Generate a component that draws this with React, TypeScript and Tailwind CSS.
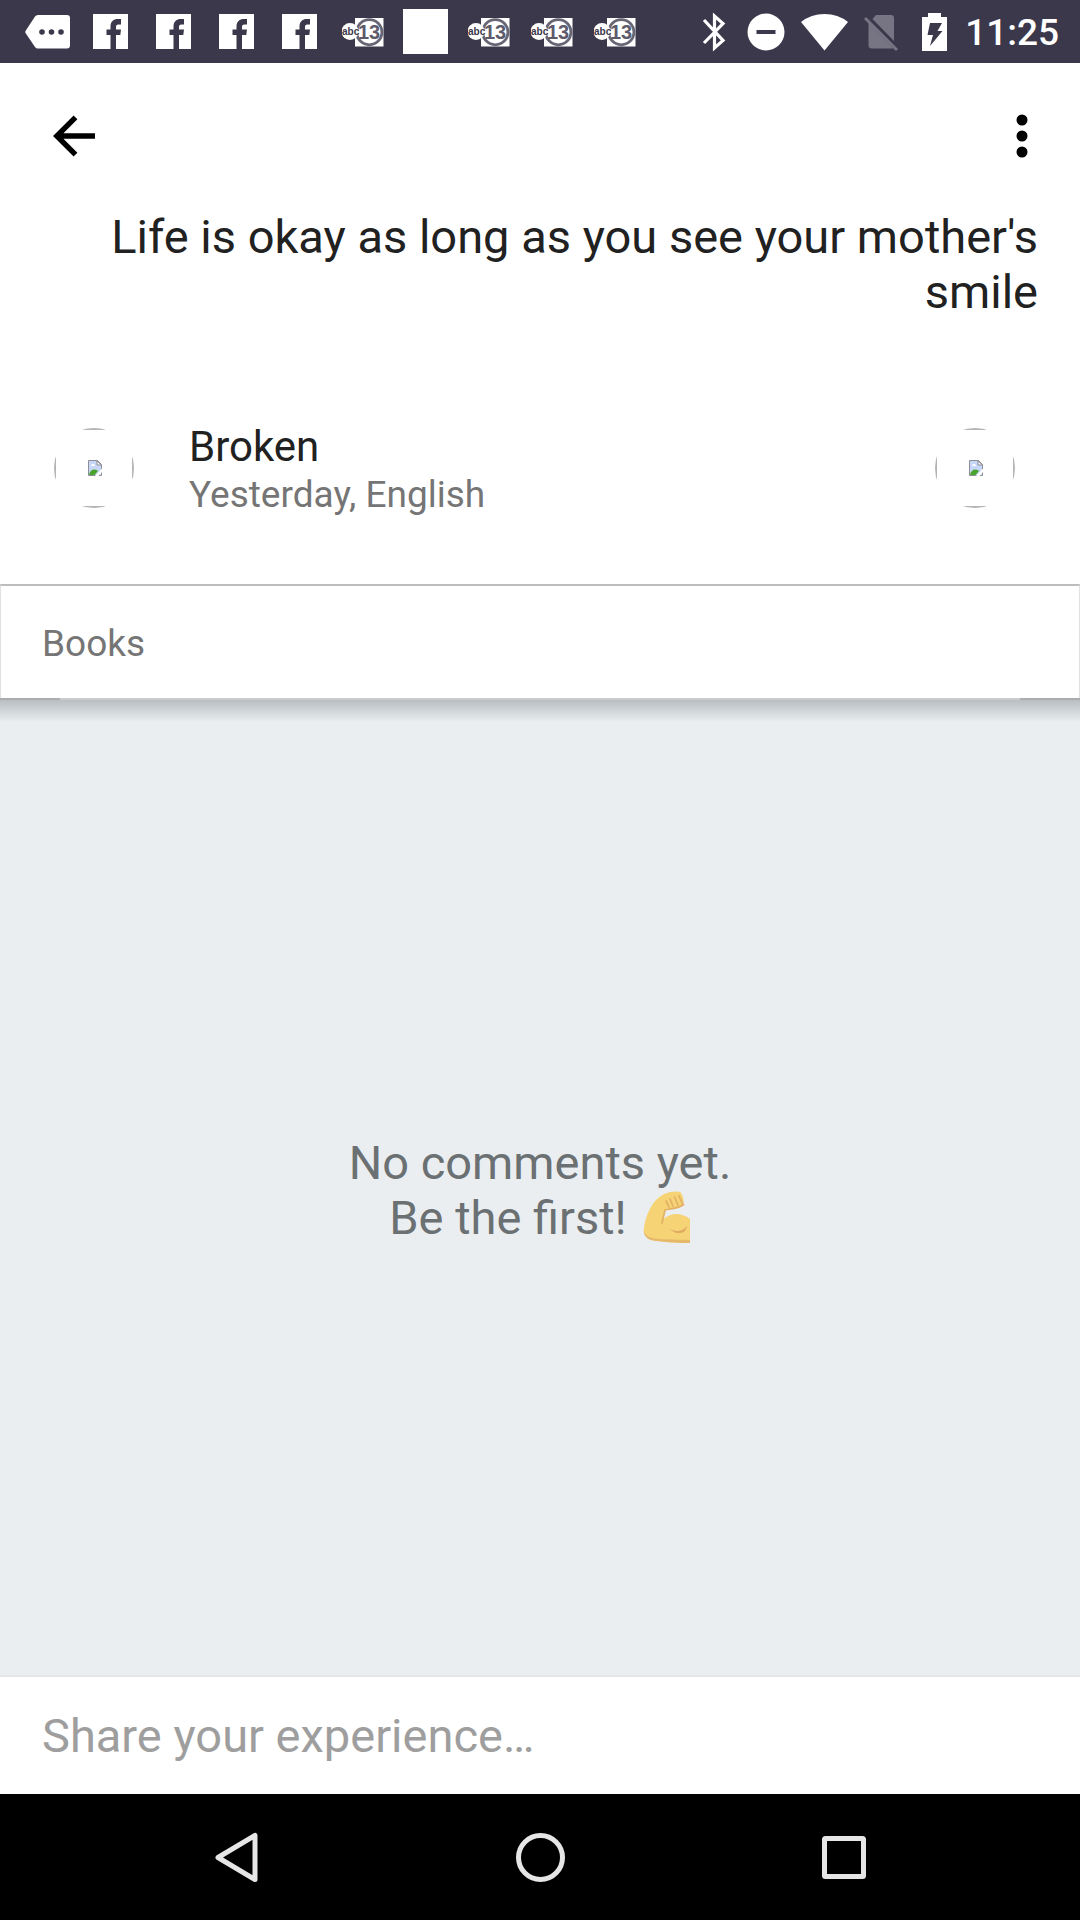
import React from 'react';

function TagIcon() {
  return (
    <svg viewBox="0 0 46 36" className="h-[36px] w-[46px]" aria-hidden="true">
      <path d="M13 1H42Q45 1 45 4V31Q45 34.500 42 34.500H13Q11 34.500 10 33L0.500 19Q0 18 0.500 17L10 2.500Q11 1 13 1Z" fill="#fff" />
      <circle cx="17" cy="18" r="2.800" fill="#3b384b" />
      <circle cx="26.500" cy="18" r="2.800" fill="#3b384b" />
      <circle cx="36" cy="18" r="2.800" fill="#3b384b" />
    </svg>
  );
}

function FacebookIcon() {
  return (
    <svg viewBox="0 0 35 35" className="size-[35px]" aria-hidden="true">
      <path d="M0 0H35V35H0Z" fill="#fff" />
      <path d="M17.500 35V21H13.500V15.500H17.500V12.500C17.500 7.500 20.500 5 25 5H28V10.500H25.500C23.500 10.500 23 11.500 23 13V15.500H28L27.300 21H23V35Z" fill="#3b384b" />
    </svg>
  );
}

function Abc13Icon() {
  return (
    <svg viewBox="0 0 42 30" className="h-[30px] w-[42px]" aria-hidden="true">
      <path d="M13 1H41.500V29.500H13Z" fill="#fff" />
      <circle cx="27.300" cy="15.200" r="12.600" fill="#fff" stroke="#686675" strokeWidth="2.800" />
      <circle cx="8" cy="14.500" r="8.500" fill="#fff" />
      <text x="0" y="18" fontSize="10" fontWeight="700" fontFamily="Liberation Sans, sans-serif" fill="#3b384b">
        abc
      </text>
      <text x="16" y="22" fontSize="20" fontWeight="700" fontFamily="Liberation Sans, sans-serif" fill="#5d5a6b">
        13
      </text>
    </svg>
  );
}

function SystemIcons() {
  return (
    <div className="flex items-center text-white">
      <svg viewBox="0 0 24 40" className="mr-[21px] h-[40px] w-[24px]" aria-hidden="true">
        <path d="M2 8L21 28.500L12.500 36V4L21 11.500L2 31" fill="none" stroke="currentColor" strokeWidth="3.200" />
      </svg>
      <svg viewBox="0 0 38 38" className="mr-[16px] size-[38px]" aria-hidden="true">
        <circle cx="19" cy="19" r="18.500" fill="currentColor" />
        <path d="M9.500 19H28.500" stroke="#3b384b" strokeWidth="4" />
      </svg>
      <svg viewBox="0 0 47 38" className="mr-[16px] h-[38px] w-[47px]" aria-hidden="true">
        <path d="M0 9Q10 1 23.500 1T47 9L23.500 37.500Z" fill="currentColor" />
      </svg>
      <svg viewBox="0 0 34 38" className="mr-[24px] h-[38px] w-[34px]" aria-hidden="true">
        <path d="M12 2H27Q30 2 30 5V28L8.500 6ZM4.500 10L29 35Q28.500 35.500 27 35.500H8Q4.500 35.500 4.500 32Z" fill="#777583" />
        <path d="M1 5L33 37" stroke="#777583" strokeWidth="3" />
      </svg>
      <svg viewBox="0 0 25 38" className="mr-[18px] h-[38px] w-[25px]" aria-hidden="true">
        <path d="M6 0H19V4H25V38H0V4H6Z" fill="currentColor" />
        <path d="M8 10H20L15.500 18H20.500L8 33L11 22H5.500Z" fill="#3b384b" />
      </svg>
      <span className="pt-[2px] text-[37px] leading-[40px] font-medium">11:25</span>
    </div>
  );
}

function StatusBar() {
  const icons = [TagIcon, FacebookIcon, FacebookIcon, FacebookIcon, FacebookIcon, Abc13Icon, null, Abc13Icon, Abc13Icon, Abc13Icon];
  return (
    <div className="flex h-[63px] items-center justify-between bg-[#3b384b] pr-[21px] pl-[16px]">
      <div className="flex items-center">
        {icons.map((Icon, i) => (
          <span key={i} className="flex w-[63px] justify-center">
            {Icon ? <Icon /> : <span className="size-[45px] bg-white" />}
          </span>
        ))}
      </div>
      <SystemIcons />
    </div>
  );
}

function MissingPicture() {
  return (
    <span className="block size-[80px] shrink-0 overflow-hidden rounded-full">
      <span className="flex size-full items-center justify-center border-2 border-[#b4b4b4]">
        <svg viewBox="0 0 14 16" className="ml-[2px] h-[16px] w-[14px]" aria-hidden="true">
          <path d="M0.500 0.500H9.500L13.500 4.500V15.500H0.500Z" fill="#c6d7f7" stroke="#8e8e96" />
          <path d="M9 1V5H13.500Z" fill="#fff" stroke="#8e8e96" />
          <path d="M3 6Q3 4 5 4Q7 4 7 6Z" fill="#fff" />
          <path d="M1 15Q2 9.500 6.500 9.500Q9 9.500 10 11L6.500 15Z" fill="#4aa32c" />
          <path d="M7 16L14 8.500V12L10.500 16Z" fill="#fff" />
        </svg>
      </span>
    </span>
  );
}

function FlexedArm() {
  return (
    <svg viewBox="0 0 48 54" role="img" aria-label="Flexed arm" className="h-[54px] w-[48px]">
      <path d="M1 38C2 28 7 16 14 9C20 3 30 0 37 2C40 4 41 10 40.500 15C38 18 30 19 22 20L20 30C25 24 34 23 39 25Q44 26 47 29V53C34 53 18 52 8 50C2 48 0 43 1 38Z" fill="#f6d476" />
      <path d="M1 41C3 47 8 48 15 49L47 50V53C33 53 17 52 8 50C3 48 1 45 1 41Z" fill="#e6b96a" />
      <path d="M40.500 14.500C37 18 28 18.500 22 20L19 33M26 17L23 11M30 16L27 9M35 15L31.500 7M39.500 13.500L36 6" fill="none" stroke="#e3b266" strokeWidth="1.800" strokeLinecap="round" />
      <path d="M27 39C32 42 40 42 44 36C43 45 32 45 27 39Z" fill="#e0ab62" />
    </svg>
  );
}

function CardShadow() {
  return (
    <div className="absolute -inset-x-px top-full" aria-hidden="true">
      <div className="flex h-[2px] bg-[#c8cccf]">
        <span className="w-[60px] bg-[#a9adaf]" />
        <span className="flex-1" />
        <span className="w-[60px] bg-[#a9adaf]" />
      </div>
      <div className="h-[22px] bg-linear-to-b from-[#b8bec1] to-[#eaeef1]" />
    </div>
  );
}

export default function App() {
  return (
    <div className="flex min-h-screen flex-col bg-white font-[Roboto,sans-serif]">
      <StatusBar />
      <header className="flex h-[146px] items-center justify-between px-[42px]">
        <button type="button" aria-label="Back" className="flex size-[64px] items-center justify-center">
          <svg viewBox="0 0 42 42" className="size-[42px]" aria-hidden="true">
            <path d="M42 21H4M22.500 2.300L3.800 21L22.500 39.700" fill="none" stroke="#000" strokeWidth="5.400" />
          </svg>
        </button>
        <button type="button" aria-label="More options" className="flex h-[64px] w-[32px] items-center justify-center">
          <svg viewBox="0 0 12 44" className="h-[44px] w-[12px]" aria-hidden="true">
            <circle cx="6" cy="6" r="5.500" />
            <circle cx="6" cy="22" r="5.500" />
            <circle cx="6" cy="38" r="5.500" />
          </svg>
        </button>
      </header>

      <main className="flex flex-1 flex-col">
        <h1 className="px-[42px] text-right text-[47px] leading-[55px] text-[#212121]">
          Life is okay as long as you see your mother's smile
        </h1>
        <section className="mt-[98px] mb-[65px] flex items-center pr-[65px] pl-[54px]">
          <MissingPicture />
          <div className="ml-[55px] flex-1 pt-[6px]">
            <p className="text-[42px] leading-[48px] text-[#212121]">Broken</p>
            <p className="text-[37px] leading-[48px] text-[#757575]">Yesterday, English</p>
          </div>
          <button type="button" aria-label="Language">
            <MissingPicture />
          </button>
        </section>

        <div className="relative z-10 border-x border-t-2 border-[#e0e0e0] border-t-[#bbbdbe] bg-white px-[41px] pt-[34px] pb-[30px]">
          <a href="#books" className="block text-[37px] leading-[48px] text-[#757575]">
            Books
          </a>
          <CardShadow />
        </div>

        <section className="flex flex-1 flex-col items-center justify-center bg-[#eaeef1] pt-[6px] text-[47px] leading-[55px] text-[#6b7073]">
          <p>No comments yet.</p>
          <p className="flex items-center gap-[16px]">
            Be the first! <FlexedArm />
          </p>
        </section>
      </main>

      <form className="h-[119px] border-t-2 border-[#e4e7e9] bg-white">
        <input
          type="text"
          aria-label="Share your experience"
          placeholder="Share your experience…"
          className="size-full px-[42px] text-[47px] text-[#212121] outline-none placeholder:text-[#9e9e9e]"
        />
      </form>

      <nav className="flex h-[126px] items-center justify-center gap-[240px] bg-black text-[#e6e6e6]">
        <button type="button" aria-label="Back">
          <svg viewBox="0 0 64 64" className="size-[64px]" aria-hidden="true">
            <path d="M51 10.500V54.500L14 32.500Z" fill="none" stroke="currentColor" strokeWidth="5" strokeLinejoin="round" />
          </svg>
        </button>
        <button type="button" aria-label="Home">
          <svg viewBox="0 0 64 64" className="size-[64px]" aria-hidden="true">
            <circle cx="32.500" cy="32.500" r="22" fill="none" stroke="currentColor" strokeWidth="5" />
          </svg>
        </button>
        <button type="button" aria-label="Recent apps">
          <svg viewBox="0 0 64 64" className="size-[64px]" aria-hidden="true">
            <rect x="12.500" y="13.500" width="39" height="38" rx="1" fill="none" stroke="currentColor" strokeWidth="5" />
          </svg>
        </button>
      </nav>
    </div>
  );
}
